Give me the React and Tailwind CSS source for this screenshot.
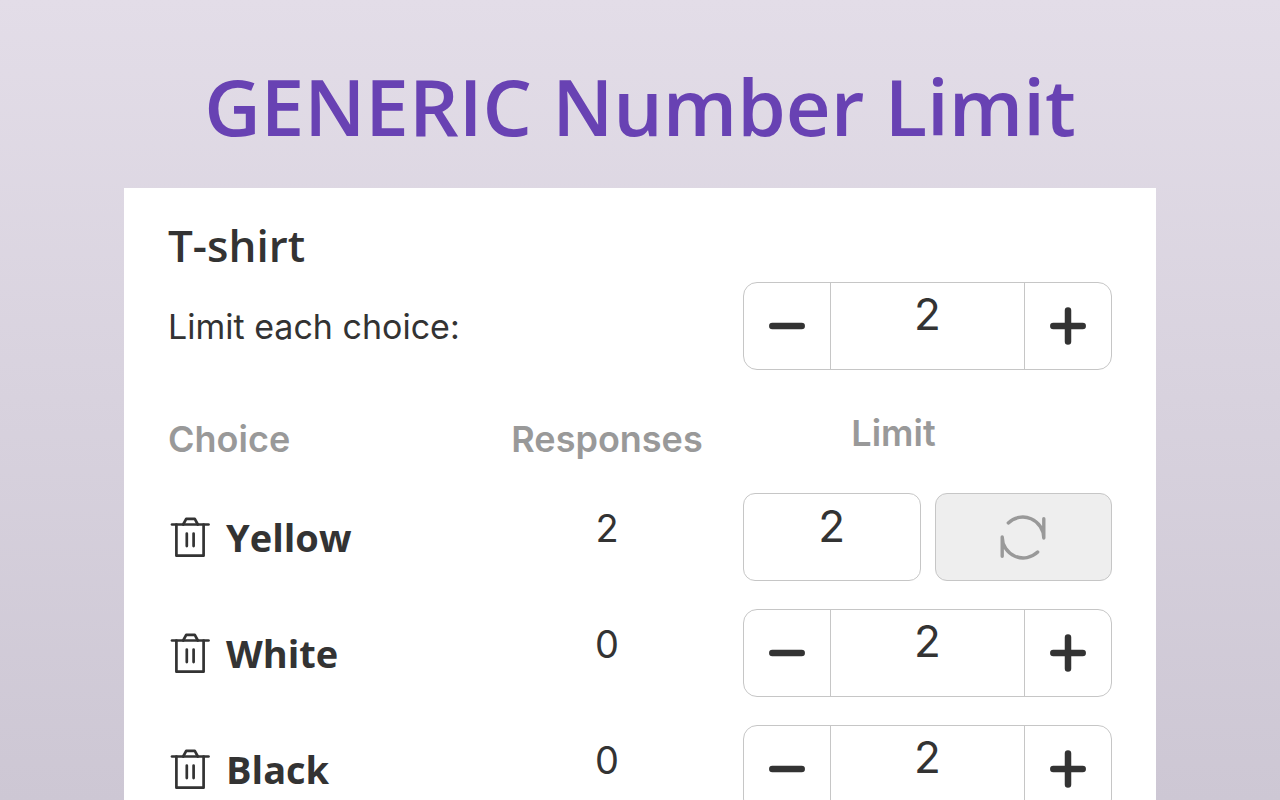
import { useState } from "react"

const initialChoices = [
  { id: 1, name: "Yellow", responses: 2, limit: 2, custom: true },
  { id: 2, name: "White", responses: 0, limit: 2 },
  { id: 3, name: "Black", responses: 0, limit: 2 },
]

const TrashIcon = () => (
  <svg className="h-11 w-11" viewBox="0 0 44 44" fill="none" stroke="#333" strokeWidth="2.7" strokeLinecap="round" strokeLinejoin="round" aria-hidden="true">
    <path d="M4 9.5h36.5" />
    <path d="M8.4 9.5v31.2h27.2V9.5" />
    <path d="M15.2 9.5l3-5.6h8.6l3 5.6" />
    <path d="M18.8 18.5v12.6M25.6 18.5v12.6" />
  </svg>
)

const MinusIcon = () => (
  <svg className="h-11 w-11" viewBox="0 0 44 44" fill="none" stroke="#333" strokeWidth="6.5" strokeLinecap="round" aria-hidden="true">
    <path d="M7.3 22h29.4" />
  </svg>
)

const PlusIcon = () => (
  <svg className="h-11 w-11" viewBox="0 0 44 44" fill="none" stroke="#333" strokeWidth="6.5" strokeLinecap="round" aria-hidden="true">
    <path d="M7.3 22h29.4M22 6.5v31" />
  </svg>
)

const RefreshIcon = () => (
  <svg className="h-12 w-12" viewBox="0 0 48 48" fill="none" stroke="#999" strokeWidth="3.4" strokeLinecap="round" strokeLinejoin="round" aria-hidden="true">
    <path d="M9.3 9.9A21 21 0 0 1 44.8 25V5.7" />
    <path d="M38.7 39.1A21 21 0 0 1 3.2 24v19.3" />
  </svg>
)

const Stepper = ({ label, value, onChange }) => (
  <div className="flex h-[88px] w-full overflow-hidden rounded-[14px] border border-[#c6c6c6] bg-white">
    <button type="button" aria-label={`Decrease ${label}`} onClick={() => onChange(Math.max(0, value - 1))} className="flex w-[86px] shrink-0 items-center justify-center">
      <MinusIcon />
    </button>
    <input
      aria-label={label}
      value={value}
      onChange={(e) => onChange(Number(e.target.value) || 0)}
      className="w-full min-w-0 border-x border-[#c6c6c6] pb-6 text-center text-[44px] leading-none outline-none"
    />
    <button type="button" aria-label={`Increase ${label}`} onClick={() => onChange(value + 1)} className="flex w-[86px] shrink-0 items-center justify-center">
      <PlusIcon />
    </button>
  </div>
)

const App = () => {
  const [eachLimit, setEachLimit] = useState(2)
  const [choices, setChoices] = useState(initialChoices)

  const updateLimit = (id, limit) => {
    setChoices(choices.map((c) => (c.id === id ? { ...c, limit } : c)))
  }

  const resetLimit = (id) => {
    setChoices(choices.map((c) => (c.id === id ? { ...c, limit: eachLimit, custom: false } : c)))
  }

  return (
    <main className="h-screen overflow-hidden bg-linear-to-b from-[#e3dde8] to-[#cdc7d4] px-8 font-['Inter',sans-serif] text-[#333]">
      <h1 className="pt-[46px] pb-[22px] text-center font-['Open_Sans',sans-serif] text-[78px] leading-[120px] font-semibold text-[#6842b3]">
        GENERIC Number Limit
      </h1>

      <section className="mx-auto max-w-[1032px] bg-white px-11 pt-8 pb-8">
        <h2 className="font-['Open_Sans',sans-serif] text-[44px] leading-[50px] font-semibold">T-shirt</h2>

        <div className="mt-3 flex items-center justify-between">
          <span className="text-[34px]">Limit each choice:</span>
          <div className="w-[369px]">
            <Stepper label="limit for each choice" value={eachLimit} onChange={setEachLimit} />
          </div>
        </div>

        <table className="mt-7 w-full table-fixed">
          <colgroup>
            <col />
            <col className="w-[272px]" />
            <col className="w-[369px]" />
          </colgroup>
          <thead>
            <tr className="h-[81px] text-[36px] leading-[44px] text-[#999]">
              <th className="text-left font-semibold">Choice</th>
              <th className="font-semibold">Responses</th>
              <th className="pr-[68px] pb-3 font-semibold">Limit</th>
            </tr>
          </thead>
          <tbody>
            {choices.map((choice) => (
              <tr key={choice.id} className="h-[116px]">
                <td>
                  <div className="flex items-center gap-[14px]">
                    <button type="button" aria-label={`Delete ${choice.name}`}>
                      <TrashIcon />
                    </button>
                    <span className="font-['Open_Sans',sans-serif] text-[38px] leading-[52px] font-bold">{choice.name}</span>
                  </div>
                </td>
                <td className="pb-[18px] text-center text-[38px]">{choice.responses}</td>
                <td>
                  {choice.custom ? (
                    <div className="flex gap-[14px]">
                      <input
                        aria-label={`Limit for ${choice.name}`}
                        value={choice.limit}
                        onChange={(e) => updateLimit(choice.id, Number(e.target.value) || 0)}
                        className="h-[88px] w-full min-w-0 flex-1 rounded-xl border border-[#c6c6c6] pb-[22px] text-center text-[44px] leading-none outline-none"
                      />
                      <button
                        type="button"
                        aria-label={`Reset limit for ${choice.name}`}
                        onClick={() => resetLimit(choice.id)}
                        className="flex h-[88px] flex-1 items-center justify-center rounded-xl border border-[#c6c6c6] bg-[#eeeeee]"
                      >
                        <RefreshIcon />
                      </button>
                    </div>
                  ) : (
                    <Stepper label={`limit for ${choice.name}`} value={choice.limit} onChange={(v) => updateLimit(choice.id, v)} />
                  )}
                </td>
              </tr>
            ))}
          </tbody>
        </table>
      </section>
    </main>
  )
}

export default App
